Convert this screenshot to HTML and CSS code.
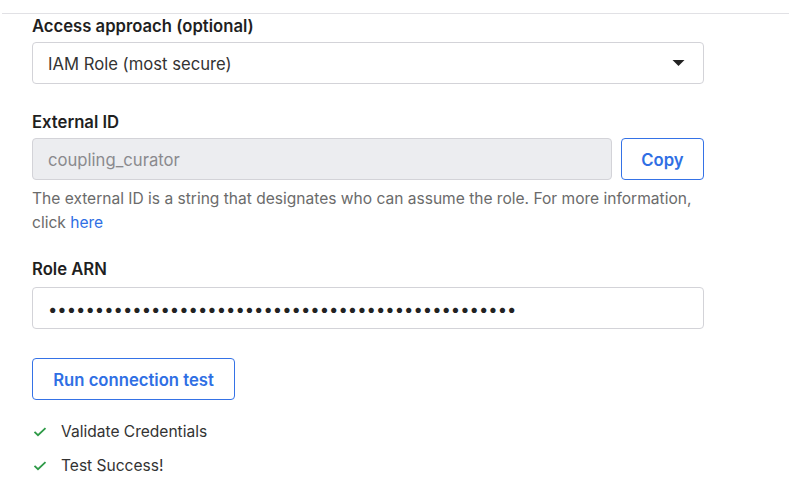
FILE: index.html
```html
<!DOCTYPE html>
<html>
<head>
<meta charset="utf-8">
<link rel="stylesheet" href="styles.css">
</head>
<body>
<div class="rule"></div>
<div class="form">
  <div class="field">
    <div class="label">Access approach (optional)</div>
    <div class="select">
      <span>IAM Role (most secure)</span>
      <svg class="caret" width="13" height="8" viewBox="0 0 13 8"><path d="M0.5 1 L12.5 1 L6.5 7 Z" fill="#222"/></svg>
    </div>
  </div>
  <div class="field f2">
    <div class="label">External ID</div>
    <div class="row">
      <div class="input disabled">coupling_curator</div>
      <button class="btn copy">Copy</button>
    </div>
    <p class="help">The external ID is a string that designates who can assume the role. For more information, click <a href="#">here</a></p>
  </div>
  <div class="field f3">
    <div class="label">Role ARN</div>
    <div class="input"><span class="dots">••••••••••••••••••••••••••••••••••••••••••••••••••</span></div>
  </div>
  <button class="btn run">Run connection test</button>
  <ul class="checks">
    <li><svg width="14" height="10" viewBox="0 0 14 10"><path d="M1.5 4.8 L5 8.2 L12.5 1.2" fill="none" stroke="#2e9a47" stroke-width="1.8"/></svg><span>Validate Credentials</span></li>
    <li><svg width="14" height="10" viewBox="0 0 14 10"><path d="M1.5 4.8 L5 8.2 L12.5 1.2" fill="none" stroke="#2e9a47" stroke-width="1.8"/></svg><span>Test Success!</span></li>
  </ul>
</div>
</body>
</html>
```
FILE: styles.css
```css
* { box-sizing: border-box; }
body {
  margin: 0;
  font-family: Inter, "Liberation Sans", sans-serif;
  font-size: 16.67px;
  color: #333;
  background: #fff;
}
.rule {
  margin: 13px 2px 0;
  border-top: 1px solid #e1e1e5;
}
.form {
  width: 704px;
  padding-left: 32px;
  padding-top: 1px;
}
.label {
  font-weight: 600;
  line-height: 22px;
  color: #1f1f1f;
  margin-bottom: 5px;
}
.select, .input {
  height: 42px;
  border: 1px solid #d3d3d8;
  border-radius: 4px;
  display: flex;
  align-items: center;
  padding: 2px 15px 0;
  color: #333;
}
.select { justify-content: space-between; }
.caret { margin-right: 3px; margin-top: -2px; }
.f2 { margin-top: 27px; }
.f3 { margin-top: 23px; }
.f3 .label { margin-bottom: 7px; }
.row { display: flex; gap: 9px; }
.input.disabled {
  flex: 1;
  background: #ecedf0;
  color: #8a8a8e;
}
.btn {
  font-family: inherit;
  font-size: 16.67px;
  font-weight: 600;
  color: #2f6fe4;
  background: #fff;
  border: 1px solid #3572e6;
  border-radius: 4px;
  height: 42px;
  padding: 2px 0 0;
  cursor: pointer;
}
.copy { width: 83px; }
.help {
  margin: 7px 0 0;
  font-size: 15.56px;
  line-height: 24px;
  color: #6b6b6b;
}
.help a { color: #2f6fe4; text-decoration: none; }
.dots {
  color: #222;
}
.run { margin-top: 29px; width: 203px; }
.checks {
  list-style: none;
  margin: 20px 0 0;
  padding: 0;
  font-size: 15.56px;
}
.checks li {
  display: flex;
  align-items: center;
  line-height: 24px;
  height: 24px;
  margin-bottom: 10px;
}
.checks svg { margin-left: 1px; margin-right: 14px; }
```
